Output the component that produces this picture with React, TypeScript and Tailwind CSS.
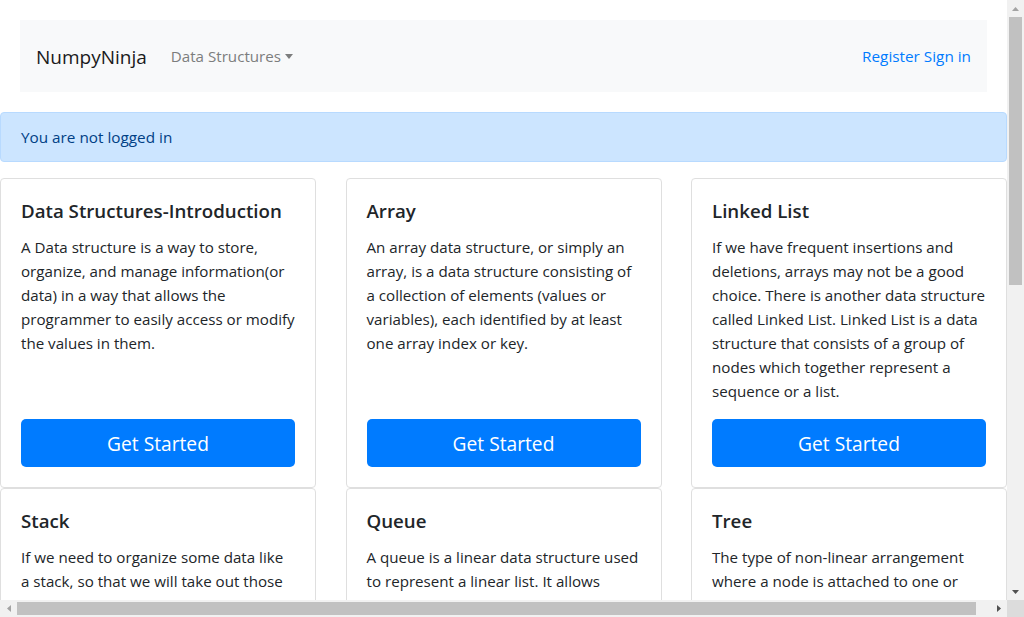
import React from "react";

type Card = { title: string; lines: string[]; button?: boolean };

const cards: Card[] = [
  {
    title: "Data Structures-Introduction",
    lines: [
      "A Data structure is a way to store,",
      "organize, and manage information(or",
      "data) in a way that allows the",
      "programmer to easily access or modify",
      "the values in them.",
    ],
    button: true,
  },
  {
    title: "Array",
    lines: [
      "An array data structure, or simply an",
      "array, is a data structure consisting of",
      "a collection of elements (values or",
      "variables), each identified by at least",
      "one array index or key.",
    ],
    button: true,
  },
  {
    title: "Linked List",
    lines: [
      "If we have frequent insertions and",
      "deletions, arrays may not be a good",
      "choice. There is another data structure",
      "called Linked List. Linked List is a data",
      "structure that consists of a group of",
      "nodes which together represent a",
      "sequence or a list.",
    ],
    button: true,
  },
  {
    title: "Stack",
    lines: [
      "If we need to organize some data like",
      "a stack, so that we will take out those",
      "at the top ones first, we call it a stack.",
      "A stack is a linear data structure.",
    ],
    button: true,
  },
  {
    title: "Queue",
    lines: [
      "A queue is a linear data structure used",
      "to represent a linear list. It allows",
      "insertion of an element to be done at",
      "one end and deletion at the other end.",
    ],
    button: true,
  },
  {
    title: "Tree",
    lines: [
      "The type of non-linear arrangement",
      "where a node is attached to one or",
      "more nodes is called a tree, and the",
      "top node is called the root.",
    ],
    button: true,
  },
];

function CardBox({ c }: { c: Card }) {
  return (
    <div className="flex flex-col rounded border border-[#dfdfdf] bg-white p-5">
      <h5 className="mb-3 whitespace-nowrap text-[18.7px] font-semibold leading-[24px] text-[#212529]">
        {c.title}
      </h5>
      <p className="mb-4 text-[15.15px] leading-6 text-[#212529]">
        {c.lines.map((l, i) => (
          <span key={i} className="block whitespace-nowrap">
            {l}
          </span>
        ))}
      </p>
      {c.button && (
        <button className="mt-auto h-12 w-full rounded-[5px] bg-[#007bff] pt-[2px] text-[19.2px] leading-[30px] text-white">
          Get Started
        </button>
      )}
    </div>
  );
}

function Tri({ dir, color }: { dir: "up" | "down" | "left" | "right"; color: string }) {
  const pts =
    dir === "up"
      ? "0,4 7,4 3.5,0"
      : dir === "down"
      ? "0,0 7,0 3.5,4"
      : dir === "left"
      ? "4,0 4,7 0,3.5"
      : "0,0 0,7 4,3.5";
  const w = dir === "up" || dir === "down" ? 7 : 4;
  const h = dir === "up" || dir === "down" ? 4 : 7;
  return (
    <svg width={w} height={h} viewBox={`0 0 ${w} ${h}`}>
      <polygon points={pts} fill={color} />
    </svg>
  );
}

export default function App() {
  return (
    <div className="flex h-[617px] w-[1024px] flex-col overflow-hidden bg-white font-['Open_Sans',sans-serif] text-[#212529]">
      <div className="flex min-h-0 flex-1">
        <main className="min-w-0 flex-1 overflow-hidden">
          <div className="px-5 pt-5">
            <nav className="flex h-[72px] items-center bg-[#f8f9fa] px-4">
              <span className="mr-4 pt-[1px] text-[19px] leading-[30px] text-[#1a1a1a]">NumpyNinja</span>
              <span className="flex items-center px-2 text-[15.15px] leading-6 text-[#7c7d7d]">
                Data Structures
                <span className="ml-[4px] inline-block h-0 w-0 border-x-[4.5px] border-t-[5px] border-x-transparent border-t-[#7c7d7d]" />
              </span>
              <span className="ml-auto text-[15.3px] leading-6 text-[#007bff]">
                Register Sign in
              </span>
            </nav>
          </div>
          <div className="mt-5 rounded border border-[#b8daff] bg-[#cce5ff] px-5 py-3 text-[15.3px] leading-6 text-[#004085]">
            You are not logged in
          </div>
          <div className="mt-4 grid grid-cols-3 gap-x-[29.5px]">
            {cards.map((c) => (
              <CardBox key={c.title} c={c} />
            ))}
          </div>
        </main>
        <div className="flex w-[17px] flex-col bg-[#f1f1f1]">
          <div className="flex h-[17px] items-center justify-center">
            <Tri dir="up" color="#a3a3a3" />
          </div>
          <div className="mx-[2px] h-[268px] bg-[#c1c1c1]" />
          <div className="flex-1" />
          <div className="flex h-[17px] items-center justify-center">
            <Tri dir="down" color="#505050" />
          </div>
        </div>
      </div>
      <div className="flex h-[17px] bg-[#f1f1f1]">
        <div className="flex w-[17px] items-center justify-center">
          <Tri dir="left" color="#a3a3a3" />
        </div>
        <div className="my-[2px] w-[959px] bg-[#c1c1c1]" />
        <div className="flex-1" />
        <div className="flex w-[17px] items-center justify-center">
          <Tri dir="right" color="#505050" />
        </div>
        <div className="w-[17px] bg-[#dcdcdc]" />
      </div>
    </div>
  );
}
